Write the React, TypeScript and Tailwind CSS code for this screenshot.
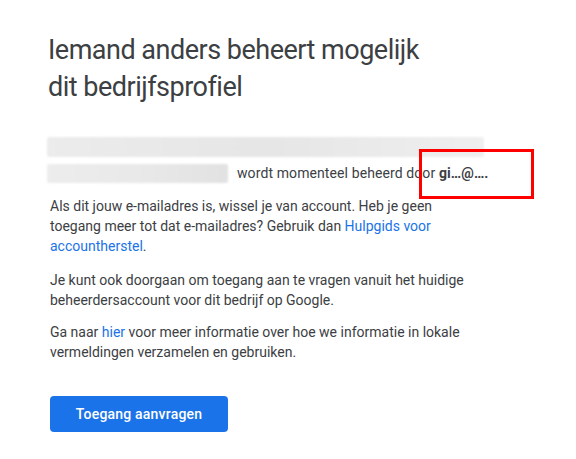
export default function App() {
  return (
    <div className="relative w-[576px] h-[459px] bg-white overflow-hidden font-['Roboto',sans-serif] text-[#3c4043]">
      <div className="pl-[48px] pr-[94px] pt-[32px]">
        <h1 className="text-[27px] leading-[37px] font-normal tracking-[-0.5px] text-[#3c4043]">
          Iemand anders beheert mogelijk
          <br />
          dit bedrijfsprofiel
        </h1>

        {/* blurred account details */}
        <div className="mt-[31px] flex flex-col gap-[6px]">
          <div className="h-[20px] w-[437px] -ml-[1px] rounded-[2px] bg-gradient-to-r from-[#ececec] via-[#e6e6e6] to-[#efefef] blur-[1px]" />
          <div className="flex items-center gap-[9px] -ml-[1px]">
            <div className="shrink-0 h-[19px] w-[181px] rounded-[2px] bg-gradient-to-r from-[#ededed] via-[#e9e9e9] to-[#e2e2e2] blur-[1px]" />
            <p className="shrink-0 text-[14px] leading-[20px] whitespace-nowrap tracking-[0.1px]">
              wordt momenteel beheerd door <span className="font-bold text-[#3c4043]">gi…@….</span>
            </p>
          </div>
        </div>

        <div className="pl-[2px] w-[434px] text-[14px] leading-[20px]">
          <p className="mt-[13px]">
            Als dit jouw e-mailadres is, wissel je van account. Heb je geen toegang meer tot dat
            e-mailadres? Gebruik dan <span className="text-[#1a73e8]">Hulpgids voor accountherstel</span>.
          </p>
          <p className="mt-[14px]">
            Je kunt ook doorgaan om toegang aan te vragen vanuit het huidige beheerdersaccount voor
            dit bedrijf op Google.
          </p>
          <p className="mt-[12px]">
            Ga naar <span className="text-[#1a73e8]">hier</span> voor meer informatie over hoe we
            informatie in lokale vermeldingen verzamelen en gebruiken.
          </p>
          <button className="mt-[34px] h-[36px] w-[178px] rounded-[4px] bg-[#1a73e8] text-white text-[14px] font-medium tracking-[0.2px]">
            Toegang aanvragen
          </button>
        </div>
      </div>

      {/* annotation */}
      <div className="absolute left-[419px] top-[149px] w-[115px] h-[50px] border-[3px] border-[#ff0000]" />
    </div>
  );
}
